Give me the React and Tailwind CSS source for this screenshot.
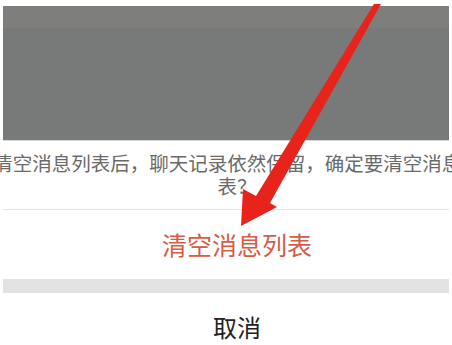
import React from 'react';

const cjk = { fontFamily: '"Noto Sans CJK SC", "Noto Sans", sans-serif' };

const Arrow = () => (
    <svg className="absolute inset-0 pointer-events-none" width="452" height="345" viewBox="0 0 452 345">
        <polygon
            points="374,4 381,4 270,203 277,207 241,226 243,189 256,196"
            fill="#e8231c"
        />
    </svg>
);

const App = () => {
    return (
        <div className="relative w-[452px] h-[345px] bg-white overflow-hidden pt-[6px] px-[3px]" style={cjk}>
            {/* Dimmed backdrop */}
            <div className="h-[134px] flex flex-col bg-[#787a79]">
                <div className="h-[22px] bg-[#7e7f7d]"></div>
            </div>
            <div className="h-px bg-[#d6d6d6]"></div>

            {/* Message */}
            <div className="-ml-[13px] w-[494px] pt-[10px] pb-[12px] text-center text-[19.5px] leading-[23px] text-[#6a6a6a]">
                清空消息列表后，聊天记录依然保留，确定要清空消息列表？
            </div>
            <div className="h-px bg-[#e6e6e6]"></div>

            {/* Actions */}
            <button className="-ml-[13px] w-[494px] h-[69px] flex items-center justify-center text-[25px] text-[#d65c44]">
                清空消息列表
            </button>
            <div className="h-[14px] bg-[#e3e3e3]"></div>
            <button className="-ml-[13px] w-[494px] h-[68px] flex items-center justify-center text-[24px] text-[#222]">
                取消
            </button>

            <Arrow />
        </div>
    );
};

export default App;
